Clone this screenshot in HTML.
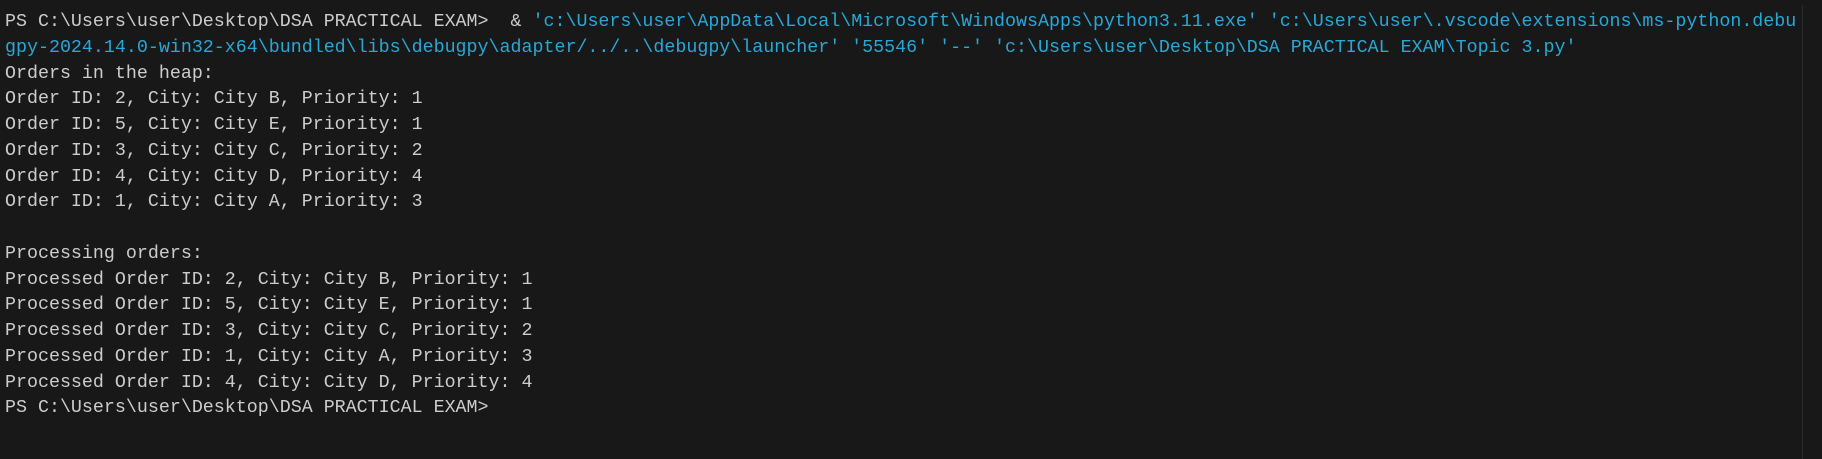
<!DOCTYPE html>
<html><head><style>
html,body{margin:0;padding:0;background:#181818;width:1822px;height:459px;overflow:hidden}
pre{margin:0;position:absolute;left:5px;top:9px;font-family:"Liberation Mono",monospace;font-size:18.32px;line-height:25.75px;color:#cccccc;white-space:pre}
.c{color:#29a7d6}
.bar{position:absolute;left:1802px;top:5px;width:1px;height:454px;background:#2b2b2b}
</style></head><body>
<pre>PS C:\Users\user\Desktop\DSA PRACTICAL EXAM&gt;  &amp; <span class="c">'c:\Users\user\AppData\Local\Microsoft\WindowsApps\python3.11.exe' 'c:\Users\user\.vscode\extensions\ms-python.debu
gpy-2024.14.0-win32-x64\bundled\libs\debugpy\adapter/../..\debugpy\launcher' '55546' '--' 'c:\Users\user\Desktop\DSA PRACTICAL EXAM\Topic 3.py'</span>
Orders in the heap:
Order ID: 2, City: City B, Priority: 1
Order ID: 5, City: City E, Priority: 1
Order ID: 3, City: City C, Priority: 2
Order ID: 4, City: City D, Priority: 4
Order ID: 1, City: City A, Priority: 3

Processing orders:
Processed Order ID: 2, City: City B, Priority: 1
Processed Order ID: 5, City: City E, Priority: 1
Processed Order ID: 3, City: City C, Priority: 2
Processed Order ID: 1, City: City A, Priority: 3
Processed Order ID: 4, City: City D, Priority: 4
PS C:\Users\user\Desktop\DSA PRACTICAL EXAM&gt;</pre>
<div class="bar"></div>
</body></html>
